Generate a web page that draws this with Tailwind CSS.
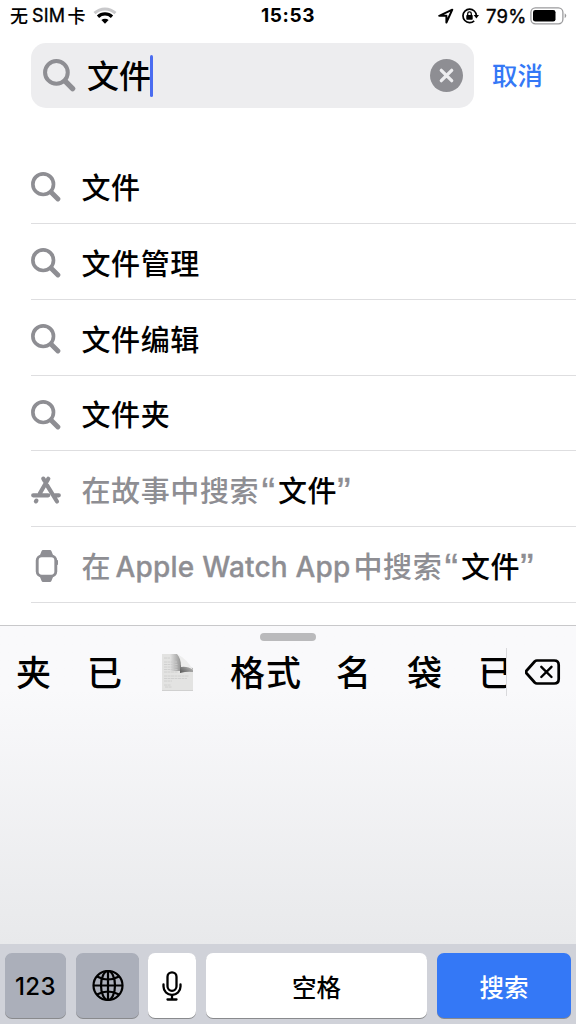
<!DOCTYPE html>
<html lang="zh-CN">
<head>
<meta charset="utf-8">
<title>搜索</title>
<script src="https://cdn.jsdelivr.net/npm/@tailwindcss/browser@4"></script>
</head>
<body class="w-[576px] h-[1024px] overflow-hidden bg-white text-black font-[Inter,'Noto_Sans_CJK_SC',sans-serif]">
<svg class="hidden">
  <symbol id="search" viewBox="0 0 32 32"><circle cx="13" cy="13" r="11" fill="none" stroke="#8e8e93" stroke-width="3.9"/><path d="M21.5 21.5L28.7 28.7" stroke="#8e8e93" stroke-width="5.2" stroke-linecap="round"/></symbol>
</svg>
<div class="flex h-full flex-col">
  <header class="flex h-8 shrink-0 items-center pl-[10px] pr-2 text-[18px] leading-8 whitespace-nowrap">
    <div class="flex w-[251px] items-center font-medium">
      <span class="w-[22px] pt-px">无</span><span class="w-[35.5px] text-[18px] font-normal tracking-[.2px] [-webkit-text-stroke:.35px]">SIM</span><span class="w-[26.5px] pt-px">卡</span>
      <svg class="h-[18px] w-6 -ml-px" viewBox="0 0 24 18" fill="none"><path d="M1.5 6.2C7.5.5 16.5.5 22.5 6.2" stroke="#c9c9cb" stroke-width="3"/><path d="M5 9.7C9 5.9 15 5.9 19 9.7" stroke="#000" stroke-width="3.3"/><path d="M8.4 13.1a5.2 5.2 0 0 1 7.2 0L12 16.7z" fill="#000"/></svg>
    </div>
    <div class="w-[177px] text-[19px] font-bold tracking-[.6px]">15:53</div>
    <svg class="h-4 w-4 shrink-0" viewBox="0 0 16 16" fill="none" stroke="#000" stroke-width="2" stroke-linejoin="round"><path d="M1.2 7.8L14.3 1.7L8.4 14.5V7.8z"/></svg>
    <svg class="ml-[7px] h-[18px] w-[18px] shrink-0" viewBox="0 0 18 18" fill="none"><path d="M13.3 4A6.700 6.700 0 1 0 13.200 13.800M13.300 4a6.700 6.700 0 0 1 2 4" stroke="#000" stroke-width="1.700"/><path d="M12.700 8h5.300l-2.600 3.500z" fill="#000"/><rect x="5.300" y="8" width="6.400" height="4.800" rx=".7" fill="#000"/><path d="M6.700 8V6.700a1.800 1.800 0 0 1 3.600 0V8" stroke="#000" stroke-width="1.300"/></svg>
    <span class="ml-[7px] w-[45px] text-[18.500px] tracking-[.3px] [-webkit-text-stroke:.35px]">79%</span>
    <svg class="-ml-px h-[18px] w-[37px] shrink-0" viewBox="0 0 37 18"><rect x=".9" y=".8" width="32" height="16" rx="4.500" fill="none" stroke="#9b9b9d" stroke-width="1.300"/><rect x="3" y="3" width="22.500" height="11.600" rx="2.300"/><path d="M34.700 6.300q3.200 2.500 0 5z" fill="#9b9b9d"/></svg>
  </header>

  <div class="flex h-[116px] shrink-0 items-start pt-[11px] pl-[31px]">
    <div class="flex h-[65px] w-[443px] items-center rounded-[15px] bg-[#ededef] pl-3 pr-[11px]">
      <svg class="h-[33px] w-[33px]"><use href="#search"/></svg>
      <span class="ml-[11px] h-[65px] text-[32px] leading-[68px] font-medium">文件</span>
      <span class="-ml-px h-[42px] w-[3px] rounded-full bg-[#4a6cf0]"></span>
      <svg class="ml-auto h-[33px] w-[33px]" viewBox="0 0 33 33"><circle cx="16.500" cy="16.500" r="16.500" fill="#8e8e93"/><path d="M11.300 11.300l10.400 10.400M21.700 11.300L11.300 21.700" stroke="#ededef" stroke-width="3.300" stroke-linecap="round"/></svg>
    </div>
    <button class="ml-[18px] h-[65px] text-[25.500px] leading-[62px] font-medium text-[#3478f6]">取消</button>
  </div>

  <main class="ml-[31px] h-[477px] shrink-0 text-[29px] font-medium tracking-[.6px] whitespace-nowrap">
    <div class="flex h-[76px] items-center border-b border-[#dedee0]"><svg class="mt-[3px] h-[30px] w-[30px]"><use href="#search"/></svg><span class="ml-[20.500px] pt-[6px]">文件</span></div>
    <div class="flex h-[76px] items-center border-b border-[#dedee0]"><svg class="mt-[3px] h-[30px] w-[30px]"><use href="#search"/></svg><span class="ml-[20.500px] pt-[6px]">文件管理</span></div>
    <div class="flex h-[76px] items-center border-b border-[#dedee0]"><svg class="mt-[3px] h-[30px] w-[30px]"><use href="#search"/></svg><span class="ml-[20.500px] pt-[6px]">文件编辑</span></div>
    <div class="flex h-[75px] items-center border-b border-[#dedee0]"><svg class="mt-[3px] h-[30px] w-[30px]"><use href="#search"/></svg><span class="ml-[20.500px] pt-[6px]">文件夹</span></div>
    <div class="flex h-[76px] items-center border-b border-[#dedee0] text-[#8e8e93]">
      <svg class="mt-[2px] h-[30px] w-[30px]" viewBox="0 0 30 30" fill="none" stroke="#8e8e93" stroke-width="4.200" stroke-linecap="round"><path d="M17.300 3.800L8.800 18.500M12.300 3.600l1.500 2.500M2.200 20.300h15M24 20.300h3.800M16.400 10.800L26 26.500M5.400 25.600L4.900 26.400"/></svg>
      <span class="ml-[20.500px] w-[180px] pt-[6px]">在故事中搜索</span><span class="w-[16.500px] pt-[7px] font-['Liberation_Sans',sans-serif] text-[41px] leading-[48px] [-webkit-text-stroke:.3px]">“</span><span class="w-[59px] pt-[6px] text-black">文件</span><span class="pt-[7px] font-['Liberation_Sans',sans-serif] text-[41px] leading-[48px] [-webkit-text-stroke:.3px]">”</span>
    </div>
    <div class="flex h-[76px] items-center border-b border-[#dedee0] text-[#8e8e93]">
      <svg class="mt-[3px] h-8 w-[30px]" viewBox="0 0 30 32"><path d="M9 5L10.600 1Q11 0 12 0h7q1 0 1.400 1L22 5zM9 27l1.600 4q.4 1 1.400 1h7q1 0 1.400-1l1.600-4z" fill="#8e8e93"/><rect x="6.200" y="5.900" width="18.600" height="20.200" rx="4.600" fill="#fff" stroke="#8e8e93" stroke-width="2.900"/><rect x="25" y="10" width="2" height="5" rx=".8" fill="#8e8e93"/></svg>
      <span class="ml-[20.500px] w-[34px] pt-[6px]">在</span><span class="w-[238px] pt-[5px] text-[28px] tracking-[.2px] [-webkit-text-stroke:.3px]">Apple Watch App</span><span class="w-[91px] pt-[6px]">中搜索</span><span class="w-[16.500px] pt-[7px] font-['Liberation_Sans',sans-serif] text-[41px] leading-[48px] [-webkit-text-stroke:.3px]">“</span><span class="w-[59px] pt-[6px] text-black">文件</span><span class="pt-[7px] font-['Liberation_Sans',sans-serif] text-[41px] leading-[48px] [-webkit-text-stroke:.3px]">”</span>
    </div>
  </main>

  <section class="relative flex h-[319px] shrink-0 flex-col border-t border-[#c8c8ca] bg-linear-to-b from-[#f9f9fb] from-20% to-[#e8e9eb]">
    <div class="absolute top-[7px] left-[260px] h-2 w-14 rounded-full bg-[#bababc]"></div>
    <div class="flex h-[92px] items-center text-[35px] leading-[92px] font-medium whitespace-nowrap">
      <div class="flex w-[506px] items-center overflow-hidden pl-4">
        <span class="w-[71px] shrink-0 pt-[2px]">夹</span><span class="w-[75px] shrink-0 pt-[2px]">已</span>
        <svg class="h-[37px] w-[31px] shrink-0" viewBox="0 0 31 37"><defs><linearGradient id="fold" x1="0" y1="1" x2=".9" y2=".3"><stop offset="0" stop-color="#555"/><stop offset="1" stop-color="#b5b5b5"/></linearGradient><linearGradient id="shade"><stop offset="0" stop-color="#e3e3e3"/><stop offset="1" stop-color="#929292"/></linearGradient></defs><path d="M0 0h15Q24 7 31 16v21H0z" fill="#e3e3e2"/><path d="M8 0h7q4 5 4 12v5H8z" fill="url(#shade)"/><path d="M18 11l13 3v4q-5-1-13 1z" fill="url(#fold)"/><path d="M15 0Q25 5 31 16q-5-4-12-3Q20 4 15 0" fill="#ededed"/><path d="M2 4h6M2 8h13M2 10.500h14M2 13h14M2 15.500h14M2 18h14M2 22h25M2 24.500h23M2 27h8M2 31h7M3 33h7" stroke="#cbcbcb" stroke-width=".8" stroke-dasharray="3 .5"/><path d="M0 36.500h31" stroke="#d0d0d0"/></svg>
        <span class="ml-[37px] w-[106px] shrink-0 pt-[2px] tracking-[1px]">格式</span><span class="w-[71px] shrink-0 pt-[2px]">名</span><span class="w-[71px] shrink-0 pt-[2px]">袋</span><span class="shrink-0 pt-[2px]">已</span>
      </div>
      <div class="h-12 w-px bg-[#d9d9dc]"></div>
      <svg class="ml-[18px] h-7 w-9" viewBox="0 0 36 28" fill="none" stroke="#000" stroke-width="2.700" stroke-linecap="round" stroke-linejoin="round"><path d="M12 2.500h17.200q4.500 0 4.500 4.500v14q0 4.500-4.500 4.500H12q-1.300 0-2.300-1L1.700 15.500q-1.300-1.500 0-3L9.700 3.500q1-1 2.300-1z"/><path d="M16.300 8.800l10.200 10.200M26.500 8.800L16.300 19" stroke-width="2.400"/></svg>
    </div>
  </section>

  <footer class="flex h-20 shrink-0 gap-[9px] bg-[#d0d2d9] pt-[9px] pl-[5px] text-[24.500px] leading-[70px] font-medium">
    <div class="h-[65px] w-[61px] rounded-[7px] bg-[#abafba] text-center text-[24px] leading-[67px] tracking-[.4px] shadow-[0_1px_0_#898a8d]">123</div>
    <div class="ml-px flex h-[65px] w-[63px] items-center justify-center rounded-[7px] bg-[#abafba] shadow-[0_1px_0_#898a8d]">
      <svg class="h-8 w-8" viewBox="0 0 32 32" fill="none" stroke="#000" stroke-width="2.200"><circle cx="16" cy="15.500" r="14.500"/><ellipse cx="16" cy="15.500" rx="7" ry="14.500"/><path d="M16 1v29M1.500 15.500h29M5 6.500q11 6 22 0M5 24.500q11-6 22 0"/></svg>
    </div>
    <div class="flex h-[65px] w-12 items-center justify-center rounded-[7px] bg-white shadow-[0_1px_0_#898a8d]">
      <svg class="h-[30px] w-5" viewBox="0 0 20 30" fill="none" stroke="#000" stroke-width="2.300" stroke-linecap="round"><rect x="5.500" y="1.300" width="9" height="18.500" rx="4.500"/><path d="M1.500 13.500v2a8.500 8.500 0 0 0 17 0v-2M10 24.200v4.300M5.500 28.500h9"/></svg>
    </div>
    <div class="ml-px h-[65px] w-[221px] rounded-[7px] bg-white text-center shadow-[0_1px_0_#898a8d]">空格</div>
    <div class="ml-px h-[65px] w-[134px] rounded-[7px] bg-[#3478f6] text-center text-white shadow-[0_1px_0_#898a8d]">搜索</div>
  </footer>
</div>
</body>
</html>
